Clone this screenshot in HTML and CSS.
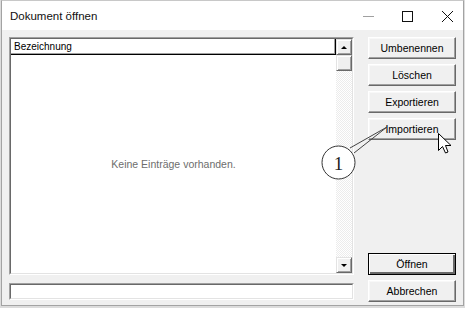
FILE: index.html
```html
<!DOCTYPE html>
<html>
  <head>
    <meta charset="utf-8" />
    <title>Dokument öffnen</title>
    <link rel="stylesheet" href="styles.css">
  </head>
  <body>
    <div class="window">
      <div class="titlebar">
        <span class="title">Dokument öffnen</span>
        <svg class="caption" width="120" height="29" viewBox="0 0 120 29">
          <line x1="20" y1="15.5" x2="31" y2="15.5" stroke="#a0a0a0" />
          <rect x="59.5" y="10.5" width="10" height="10" fill="none" stroke="#111" />
          <path d="M99 10 L110 21 M110 10 L99 21" stroke="#111" />
        </svg>
      </div>
      <div class="client">
        <div class="column-left">
          <div class="sunken listbox">
            <div class="sunken-inner list-row">
              <div class="list-main">
                <div class="list-header">Bezeichnung</div>
                <div class="list-empty">Keine Einträge vorhanden.</div>
              </div>
              <div class="scrollbar">
                <div class="sb-btn"><span class="arrow-up"></span></div>
                <div class="sb-btn sb-thumb"></div>
                <div class="sb-track"></div>
                <div class="sb-btn"><span class="arrow-down"></span></div>
              </div>
            </div>
          </div>
          <div class="sunken namefield">
            <div class="sunken-inner field-inner"></div>
          </div>
        </div>
        <div class="column-right">
          <div class="btn-group">
            <div class="btn">Umbenennen</div>
            <div class="btn">Löschen</div>
            <div class="btn">Exportieren</div>
            <div class="btn">Importieren</div>
          </div>
          <div class="btn-group">
            <div class="btn default">Öffnen</div>
            <div class="btn">Abbrechen</div>
          </div>
        </div>
      </div>
    </div>

    <svg class="overlay" width="465" height="311" viewBox="0 0 465 311">
      <path d="M350 148 L387 127 L354 153" fill="none" stroke="#444" stroke-width="1" />
      <circle cx="338.5" cy="162.5" r="16.5" fill="#fff" stroke="#333" stroke-width="1" />
      <text x="338.5" y="169.5" text-anchor="middle" class="callout-num">1</text>
      <path d="M438.5 133.5 L438.5 150.5 L442.5 146.5 L445.5 153 L448 152 L445.5 145.5 L451 145.5 Z"
            fill="#fff" stroke="#000" stroke-width="1" stroke-linejoin="miter" />
    </svg>
  </body>
</html>
```

FILE: styles.css
```css
body {
  margin: 0;
  position: relative;
  width: 465px;
  height: 311px;
  background: #ffffff;
  font-family: 'Liberation Sans', Arial, sans-serif;
  font-size: 10px;
  color: #000;
  overflow: hidden;
}
.window {
  margin-left: 1px;
  width: 461px;
  height: 304px;
  border: 1px solid #a3a3a3;
  border-top-color: #c8c8c8;
  box-shadow: 0 1px 0 1px #dcdcdc;
  display: flex;
  flex-direction: column;
  background: #f0f0f0;
}
.titlebar {
  height: 29px;
  background: #ffffff;
  display: flex;
  align-items: center;
  justify-content: space-between;
  flex: none;
}
.title {
  padding-left: 8px;
  font-size: 11.5px;
  color: #111;
}
.caption {
  display: block;
}
.client {
  flex: 1;
  display: grid;
  grid-template-columns: 345px 88px;
  column-gap: 14px;
  padding: 7px 5px 4px 7px;
}
.column-left {
  display: flex;
  flex-direction: column;
  gap: 8px;
}
.sunken {
  border: 1px solid;
  border-color: #a0a0a0 #ffffff #ffffff #a0a0a0;
}
.sunken-inner {
  border: 1px solid;
  border-color: #696969 #e3e3e3 #e3e3e3 #696969;
  background: #ffffff;
}
.listbox {
  height: 236px;
}
.list-row {
  height: 100%;
  box-sizing: border-box;
  display: flex;
}
.list-main {
  flex: 1;
  display: flex;
  flex-direction: column;
}
.list-header {
  height: 15px;
  line-height: 15px;
  padding-left: 3px;
  background: #ffffff;
  border-right: 1px solid #000;
  border-bottom: 1px solid #000;
  box-shadow: inset -1px -1px #a0a0a0;
}
.list-empty {
  flex: 1;
  display: flex;
  align-items: center;
  justify-content: center;
  color: #6d6d6d;
  font-size: 10.5px;
}
.scrollbar {
  width: 16px;
  display: flex;
  flex-direction: column;
}
.sb-btn {
  height: 16px;
  box-sizing: border-box;
  background: #f0f0f0;
  border: 1px solid;
  border-color: #e3e3e3 #696969 #696969 #e3e3e3;
  box-shadow: inset 1px 1px #fff, inset -1px -1px #a0a0a0;
  display: flex;
  align-items: center;
  justify-content: center;
}
.sb-track {
  flex: 1;
  background-color: #ffffff;
  background-image: repeating-conic-gradient(#ececec 0 25%, #ffffff 0 50%);
  background-size: 2px 2px;
}
.arrow-up,
.arrow-down {
  width: 0;
  height: 0;
  border-left: 3px solid transparent;
  border-right: 3px solid transparent;
}
.arrow-up {
  border-bottom: 3px solid #000;
}
.arrow-down {
  border-top: 3px solid #000;
}
.namefield {
  height: 15px;
}
.field-inner {
  height: 100%;
  box-sizing: border-box;
}
.column-right {
  display: flex;
  flex-direction: column;
  justify-content: space-between;
  margin-bottom: -1px;
}
.btn-group {
  display: flex;
  flex-direction: column;
  gap: 5px;
}
.btn {
  height: 22px;
  box-sizing: border-box;
  background: #f0f0f0;
  border: 1px solid;
  border-color: #ffffff #696969 #696969 #ffffff;
  box-shadow: inset -1px -1px #a0a0a0, inset 1px 1px #f8f8f8;
  display: flex;
  align-items: center;
  justify-content: center;
  font-size: 10.5px;
}
.btn.default {
  border: 1px solid #000;
  box-shadow: inset 1px 1px #fff, inset -2px -2px #696969;
}
.overlay {
  position: absolute;
  left: 0;
  top: 0;
  pointer-events: none;
}
.callout-num {
  font-family: 'Liberation Serif', 'Times New Roman', serif;
  font-size: 19px;
  fill: #222;
}
```
